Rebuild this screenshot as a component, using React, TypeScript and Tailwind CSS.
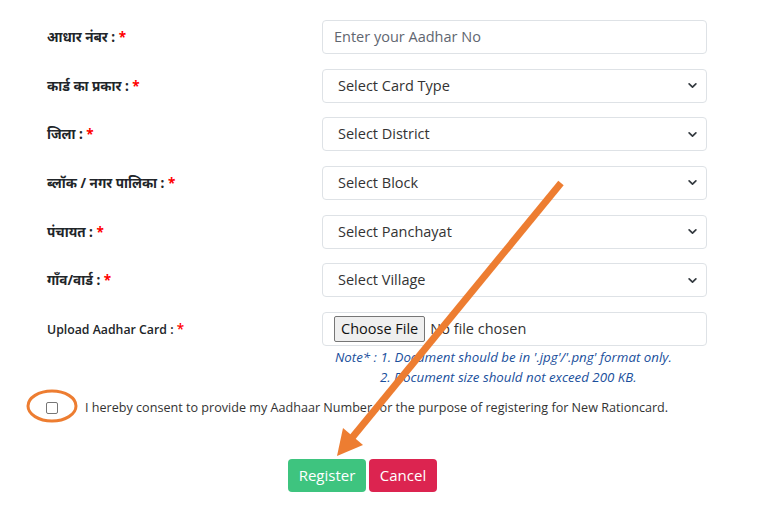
import React from "react";

const hindiFont = {
  fontFamily: '"Noto Sans", "Noto Sans Devanagari", "Lohit Devanagari", "Open Sans", sans-serif',
};

function Chevron() {
  return (
    <svg width="9" height="9" viewBox="0 0 16 16" className="shrink-0">
      <path d="M2 5l6 6 6-6" fill="none" stroke="#343a40" strokeWidth="3" strokeLinecap="round" strokeLinejoin="round" />
    </svg>
  );
}

function Label({ text, hindi = true }: { text: string; hindi?: boolean }) {
  return (
    <div
      className={`w-[275px] shrink-0 text-[#212529] ${hindi ? "font-bold text-[13.5px]" : "font-semibold text-[12.3px]"}`}
      style={hindi ? hindiFont : { fontFamily: '"Open Sans", sans-serif' }}
    >
      {text} <span className="text-[#ff0000] text-[13.5px]">*</span>
    </div>
  );
}

function SelectBox({ text }: { text: string }) {
  return (
    <div className="w-[385px] h-[34px] flex items-center justify-between pl-[15px] pr-[9px] border border-[#dee2e6] rounded-[4px] bg-white text-[14.5px] text-[#333]">
      <span>{text}</span>
      <Chevron />
    </div>
  );
}

export default function App() {
  const rows = [
    { label: "कार्ड का प्रकार :", value: "Select Card Type" },
    { label: "जिला :", value: "Select District" },
    { label: "ब्लॉक / नगर पालिका :", value: "Select Block" },
    { label: "पंचायत :", value: "Select Panchayat" },
    { label: "गाँव/वार्ड :", value: "Select Village" },
  ];
  return (
    <div className="relative w-[768px] h-[516px] bg-white overflow-hidden" style={{ fontFamily: '"Open Sans", sans-serif' }}>
      <div className="flex flex-col pl-[47px] pt-[20px] gap-[14.67px]">
        <div className="flex items-center">
          <Label text="आधार नंबर :" />
          <div className="w-[385px] h-[34px] flex items-center pl-[11px] border border-[#dee2e6] rounded-[4px] text-[14.5px] text-[#5f6670]">
            Enter your Aadhar No
          </div>
        </div>
        {rows.map((r) => (
          <div key={r.value} className="flex items-center">
            <Label text={r.label} />
            <SelectBox text={r.value} />
          </div>
        ))}
        <div className="flex items-start">
          <div className="h-[34px] flex items-center">
            <Label text="Upload Aadhar Card :" hindi={false} />
          </div>
          <div className="flex flex-col">
            <div className="w-[385px] h-[34px] flex items-center pl-[11px] border border-[#dee2e6] rounded-[4px] text-[14.5px] text-[#333]">
              <div className="h-[26px] px-[6px] flex items-center bg-[#efefef] border border-[#767676] rounded-[2px] text-[#111]">
                Choose File
              </div>
              <span className="ml-[5px]">No file chosen</span>
            </div>
            <div className="italic text-[13.3px] text-[#1a4f9c] leading-[20px] mt-[1px]">
              <div className="pl-[13px]">Note* : 1. Document should be in '.jpg'/'.png' format only.</div>
              <div className="pl-[58px]">2. Document size should not exceed 200 KB.</div>
            </div>
          </div>
        </div>
      </div>

      <div className="flex items-center pl-[46px] mt-[12px]">
        <div className="w-[12px] h-[12px] border border-[#767676] rounded-[2px] bg-white" />
        <span className="ml-[27px] text-[12.6px] text-[#333]">
          I hereby consent to provide my Aadhaar Number for the purpose of registering for New Rationcard.
        </span>
      </div>

      <div className="flex gap-[3px] mt-[41px] pl-[288px]">
        <div className="w-[78px] h-[33px] flex items-center justify-center rounded-[4px] bg-[#3ec47f] text-white text-[15px]">
          Register
        </div>
        <div className="w-[68px] h-[33px] flex items-center justify-center rounded-[4px] bg-[#dc2450] text-white text-[15px]">
          Cancel
        </div>
      </div>

      <svg className="absolute left-0 top-0 pointer-events-none" width="768" height="516" viewBox="0 0 768 516">
        <ellipse cx="52" cy="406" rx="24" ry="15" fill="none" stroke="#ed7d31" strokeWidth="3" />
        <line x1="561" y1="183" x2="351" y2="439" stroke="#ed7d31" strokeWidth="7" />
        <polygon points="337,456 343,428 363,445" fill="#ed7d31" />
      </svg>
    </div>
  );
}
